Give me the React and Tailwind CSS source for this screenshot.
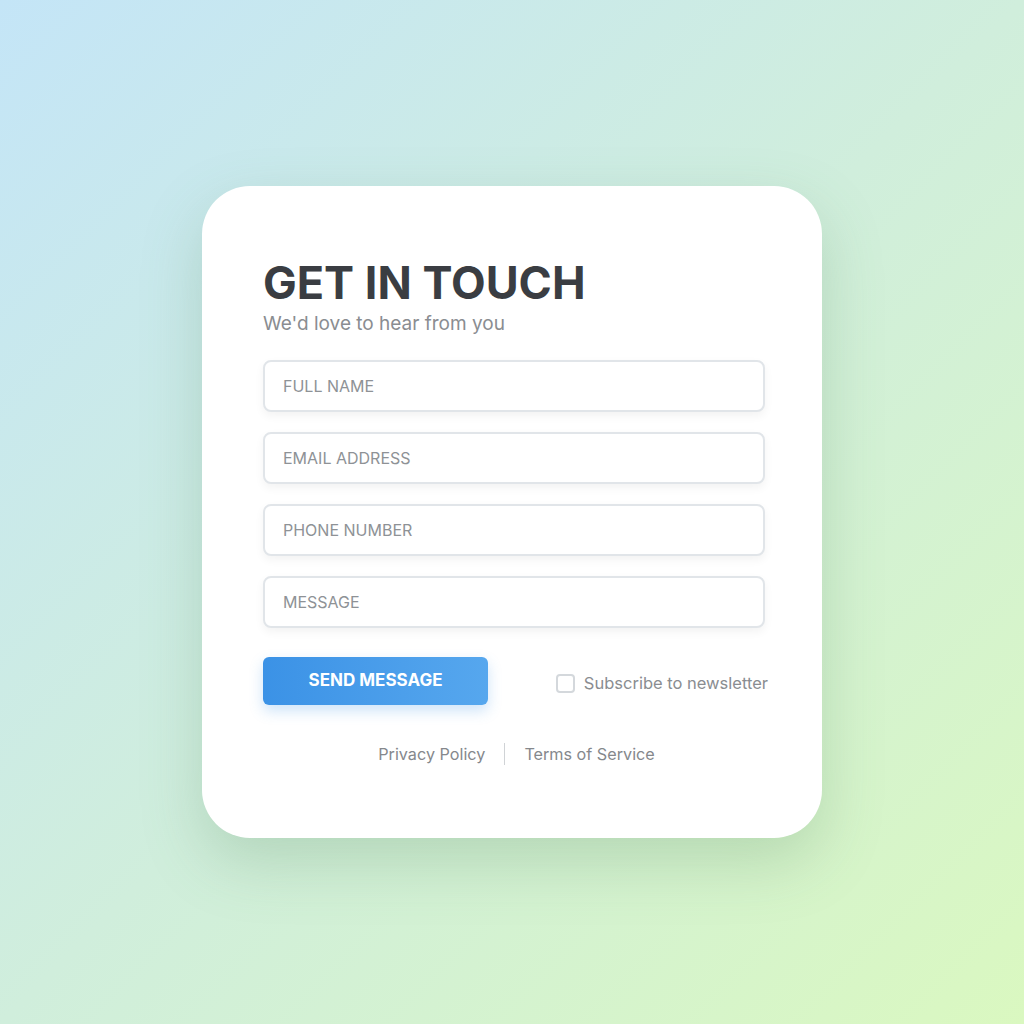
export default function App() {
  const fields = ['FULL NAME', 'EMAIL ADDRESS', 'PHONE NUMBER', 'MESSAGE'];

  return (
    <div
      className="w-[1024px] h-[1024px] flex items-start justify-center bg-gradient-to-br from-[#c4e5f7] via-[#d0eedc] to-[#daf8c0] pt-[186px]"
      style={{ fontFamily: 'Inter, "Noto Sans", sans-serif' }}
    >
      <div className="w-[620px] h-[652px] bg-white rounded-[48px] shadow-[0_24px_60px_rgba(90,140,100,0.25)] px-[61px] pt-[73px]">
        {/* Heading */}
        <h1 className="text-[45px] leading-[48px] font-bold text-[#3a3d42]">GET IN TOUCH</h1>
        <p className="mt-[5px] text-[19px] leading-[24px] text-[#8a8d91]">We'd love to hear from you</p>

        {/* Fields */}
        <div className="mt-[24px] flex flex-col gap-[20px]">
          {fields.map((f) => (
            <div
              key={f}
              className="h-[52px] w-[502px] rounded-[8px] border-2 border-[#e1e5e9] bg-white shadow-[0_4px_10px_rgba(0,0,0,0.05)] flex items-center pl-[18px] text-[16px] text-[#8e9296]"
            >
              {f}
            </div>
          ))}
        </div>

        {/* Actions */}
        <div className="mt-[29px] flex items-center justify-between w-[505px]">
          <button className="h-[48px] w-[225px] rounded-[6px] bg-gradient-to-r from-[#3b92e6] to-[#56a7ee] text-white font-bold text-[17px] shadow-[0_6px_14px_rgba(59,146,230,0.25)]">
            SEND MESSAGE
          </button>
          <label className="flex items-center gap-[9px] mt-[4px]">
            <span className="w-[19px] h-[19px] rounded-[4px] border-2 border-[#d4d8dc] bg-white"></span>
            <span className="text-[16.5px] text-[#8a8d91]">Subscribe to newsletter</span>
          </label>
        </div>

        {/* Footer links */}
        <div className="mt-[37px] flex items-center justify-center gap-[19px] text-[16.2px] text-[#85888c] w-[507px]">
          <span>Privacy Policy</span>
          <span className="w-px h-[22px] bg-[#d0d3d6]"></span>
          <span>Terms of Service</span>
        </div>
      </div>
    </div>
  );
}
